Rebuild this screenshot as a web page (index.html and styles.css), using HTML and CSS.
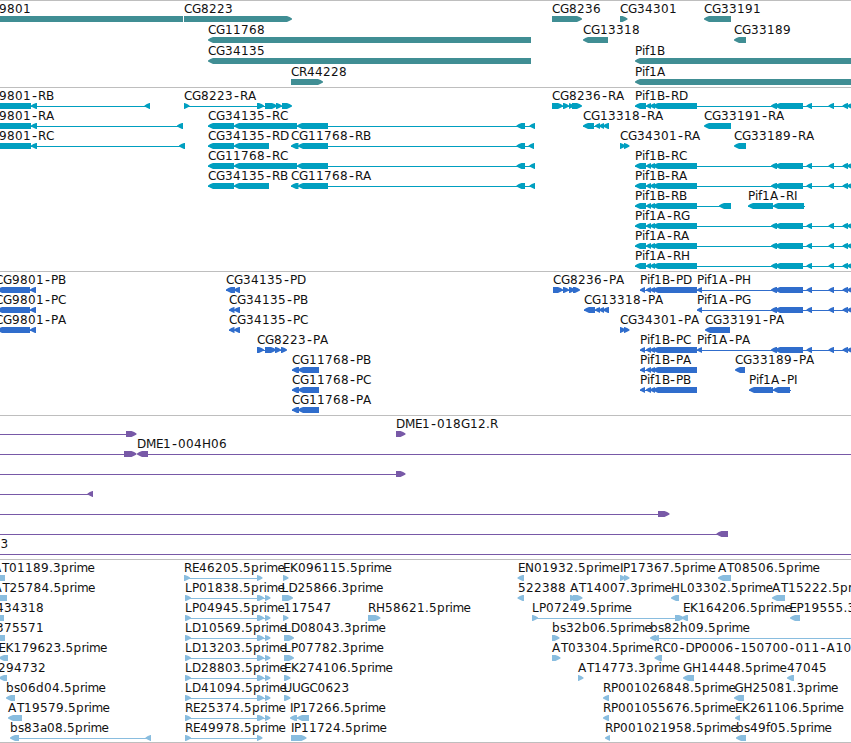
FILE: index.html
```
<!DOCTYPE html>
<html lang="en">
<head>
<meta charset="utf-8">
<title>Genome browser</title>
<link rel="stylesheet" href="styles.css">
</head>
<body>
<main class="browser">
  <section class="track track--genes"><svg class="track__canvas" id="genes"></svg></section>
  <section class="track track--transcripts"><svg class="track__canvas" id="transcripts"></svg></section>
  <section class="track track--proteins"><svg class="track__canvas" id="proteins"></svg></section>
  <section class="track track--clones"><svg class="track__canvas" id="clones"></svg></section>
  <section class="track track--ests"><svg class="track__canvas" id="ests"></svg></section>
</main>
<script src="tracks.js"></script>
</body>
</html>
```
FILE: styles.css
```
body {
  margin: 0;
  background: #fff;
}

.browser {
  display: flex;
  flex-direction: column;
  width: 851px;
  height: 743px;
  box-sizing: border-box;
  border-bottom: 1px solid #bebebe;
  overflow: hidden;
}

.track {
  box-sizing: border-box;
  border-top: 1px solid #bebebe;
  overflow: hidden;
}

.track--genes { height: 87px; color: #408e94; }
.track--transcripts { height: 184px; color: #009fc0; }
.track--proteins { height: 144px; color: #306dcc; }
.track--clones { height: 144px; color: #7859a7; }
.track--ests { height: 183px; color: #89bddf; }

.track__canvas {
  display: block;
  width: 100%;
  height: 100%;
}

.feature { fill: currentColor; }

.label {
  fill: #111;
  font: 12px "DejaVu Sans", sans-serif;
  white-space: pre;
}

.label__dash { font-size: 14px; }
```
FILE: tracks.js
```
// Feature: "row|label|label x|direction|line from-to|exons". Direction: R, L or F (flat).
const PIF_RIGHT = '771:777,775:803,806.5:812,828.5:834,842.5:848,847:855';
const PIF_B = '635:646,646:651,650:655,653:697';
const PIF_P = '640:645,646:651,650:655,653:697';
const CG_LONG = '208:234,234:297,297:328,516.5:525,529.5:535';

const tracks = {
  genes: { pitch: 21, items: [
    '0|9801|-1|F||-5:183', '0|CG8223|184|R||184:292', '0|CG8236|552|R||552:582',
    '0|CG34301|620|R||620:627.5', '0|CG33191|704|L||704:731',
    '1|CG11768|208|L||208:531', '1|CG13318|583|L||583:608', '1|CG33189|734|L||734:746',
    '2|CG34135|208|L||208:531', '2|Pif1B|635|L||635:860',
    '3|CR44228|291|R||291:323', '3|Pif1A|635|L||635:860'
  ] },
  transcripts: { pitch: 20, items: [
    '0|9801-RB|-1|L|0:150|-9:31,31:37,144.5:150',
    '1|9801-RA|-1|L|0:183|-9:31,31:37,177:183',
    '2|9801-RC|-1|L|0:185|-9:31,31:37,179:185',
    '0|CG8223-RA|184|R|184:290|184:189.5,257:264,265:277,276:282,282:292',
    '1|CG34135-RC|208|L|208:535|' + CG_LONG,
    '2|CG34135-RD|208|L|208:269|208:234,234:269',
    '2|CG11768-RB|291|L|291:534|291:298.5,298:328,516.5:525,528.5:534',
    '3|CG11768-RC|208|L|208:535|' + CG_LONG,
    '4|CG34135-RB|208|L|208:269|208:234,234:269',
    '4|CG11768-RA|291|L|291:535|291:298.5,298:328,516.5:525,529.5:535',
    '0|CG8236-RA|552|R|552:580|552:563,563:569,569:574,572:582',
    '0|Pif1B-RD|635|L|635:860|' + PIF_B + ',' + PIF_RIGHT,
    '1|CG13318-RA|583|L|583:609|583:594,595:600,599:604,603:609',
    '1|CG33191-RA|704|L||704:731',
    '2|CG34301-RA|620|R||620:625.5,624:629.5',
    '2|CG33189-RA|734|L||734:746',
    '3|Pif1B-RC|635|L|635:860|' + PIF_B + ',' + PIF_RIGHT,
    '4|Pif1B-RA|635|L|635:860|' + PIF_B + ',' + PIF_RIGHT,
    '5|Pif1B-RB|635|L|635:731|' + PIF_B + ',719:731',
    '5|Pif1A-RI|748|L|748:805|748:773,773:804',
    '6|Pif1A-RG|635|L|635:860|' + PIF_B + ',' + PIF_RIGHT,
    '7|Pif1A-RA|635|L|635:860|' + PIF_B + ',' + PIF_RIGHT,
    '8|Pif1A-RH|635|L|635:860|' + PIF_B + ',' + PIF_RIGHT
  ] },
  proteins: { pitch: 20, items: [
    '0|CG9801-PB|-5|L|0:36|-3:30,30:36', '1|CG9801-PC|-5|L|0:36|-3:30,30:36',
    '2|CG9801-PA|-5|L|0:36|-3:30,30:36',
    '0|CG34135-PD|226|L|226:240|226:235,234:240',
    '1|CG34135-PB|229|L|229:240|229:234.5,234:240',
    '2|CG34135-PC|229|L|229:240|229:234.5,234:240',
    '3|CG8223-PA|257|R|257:286|257:264,265:276,275:281,281:287',
    '4|CG11768-PB|292|L|292:319|292:299,298:319',
    '5|CG11768-PC|292|L|292:319|292:299,298:319',
    '6|CG11768-PA|292|L|292:319|292:299,298:319',
    '0|CG8236-PA|553|R|553:579|553:563,563:569,569:575,573:580',
    '0|Pif1B-PD|640|L|640:697|' + PIF_P,
    '0|Pif1A-PH|697|L|697:860|697:702,' + PIF_RIGHT,
    '1|CG13318-PA|584|L|584:609|584:595,595:600,599:604,603:609',
    '1|Pif1A-PG|697|L|697:860|697:702,' + PIF_RIGHT,
    '2|CG34301-PA|620|R||620:625.5,624:629.5',
    '2|CG33191-PA|705|L||705:730',
    '3|Pif1B-PC|640|L|640:697|' + PIF_P,
    '3|Pif1A-PA|697|L|697:860|697:702,' + PIF_RIGHT,
    '4|Pif1B-PA|640|L|640:697|' + PIF_P,
    '4|CG33189-PA|735|L||735:745',
    '5|Pif1B-PB|640|L|640:697|' + PIF_P,
    '5|Pif1A-PI|749|L|749:791|749:773,773:790'
  ] },
  clones: { pitch: 20, items: [
    '0|||R|0:134|126:136.5', '0|DME1-018G12.R|396|R||396:405.5',
    '1|||R|0:134|124:136.5', '1|DME1-004H06|137|L|140:851|137:148',
    '2|||R|0:403|396:405.5', '3|||L|0:93|87.5:93',
    '4|||R|0:667|658:669.5', '5|||L|0:728|716.5:728',
    '6|3|0.5|L|0:851|'
  ] },
  ests: { pitch: 20, items: [
    '0|AT01189.3prime|-7|F||-5:5', '1|AT25784.5prime|-6.5|F||-5:7',
    '2|434318|-4|F||-5:4', '3|375571|-4|F||-5:5',
    '4|EK179623.5prime|-1.5|L||-1:8', '5|294732|-2|L||-1:7',
    '6|bs06d04.5prime|6|L||6:15', '7|AT19579.5prime|8|L||8:22',
    '8|bs83a08.5prime|10|L|12:151|10:19,145.5:151',
    '0|RE46205.5prime|184|R|184:260|184:190,257:262.5',
    ...['LP01838', 'LP04945', 'LD10569', 'LD13203', 'LD28803', 'LD41094', 'RE25374'].map(
      (n, i) => `${i + 1}|${n}.5prime|185|R|185:269|185:191,257:264,265:270.5`),
    '8|RE49978.5prime|185|R|185:260|185:191,257:262.5',
    '0|EK096115.5prime|283|R||283:288.5', '1|LD25866.3prime|281.5|R||282:293',
    '2|117547|283.5|R||283:288.5', '3|LD08043.3prime|284|R||284:294',
    '4|LP07782.3prime|284|R||284:294', '5|EK274106.5prime|284|R||284:290.5',
    '6|UUGC0623|283.5|R||284:290.5', '7|IP17266.5prime|290|L|292:309|290:297,297:309',
    '8|IP11724.5prime|291|R||291:306.5', '2|RH58621.5prime|368|R||368:380.5',
    '0|EN01932.5prime|518|L||517.5:524', '0|IP17367.5prime|620|R||620:625.5,624:629.5',
    '0|AT08506.5prime|718|L||718:731', '1|522388|518|L||517.5:524',
    '1|AT14007.3prime|570|R||570:576,573:582.5', '1|HL03302.5prime|671|L||671:679',
    '1|AT15222.5prime|772|L||772:785', '2|LP07249.5prime|532|R|532:684|532:538,675:684',
    '2|EK164206.5prime|683|L||681.5:688', '2|EP19555.3prime|789.5|L||790:800',
    '3|bs32b06.5prime|552|R||552:559.5', '3|bs82h09.5prime|650|L|655:851|650:656,653:659',
    '4|AT03304.5prime|552|R||552:560.5', '4|RC0-DP0006-150700-011-A10|654.5|L||654.5:662',
    '5|AT14773.3prime|578|R||578:583.5', '5|GH14448.5prime|683|L||683:694',
    '5|47045|787|L||787:794', '6|RP001026848.5prime|603|L||603:609',
    '6|GH25081.3prime|734.5|L||734:744', '7|RP001055676.5prime|603|L||603:609',
    '7|EK261106.5prime|735|L||735:740', '8|RP001021958.5prime|605|L||605:610',
    '8|bs49f05.5prime|736|L||736:746'
  ] }
};

// Glyph advances in pixels; digits and anything unlisted take 8px.
const ADVANCE = { G: 9, A: 9, D: 9, H: 9, N: 9, M: 10, E: 7, P: 7, B: 7, L: 7, T: 7, U: 8.5,
  I: 3, i: 3, f: 4, '.': 4, r: 4.6, m: 10.8, e: 7, s: 6, a: 7, '-': 7 };
const NS = 'http://www.w3.org/2000/svg';

function add(parent, tag, attrs) {
  const el = document.createElementNS(NS, tag);
  for (const key in attrs) el.setAttribute(key, attrs[key]);
  parent.appendChild(el);
  return el;
}

function drawLabel(svg, text, x, baseline) {
  const label = add(svg, 'text', { class: 'label', y: baseline });
  for (const part of text.split(/(-)/).filter(Boolean)) {
    const dash = part === '-';
    const xs = [];
    for (const ch of part) {
      xs.push(dash ? x + 1 : x);
      x += ADVANCE[ch] || 8;
    }
    const span = add(label, 'tspan', { x: xs.join(' '), y: dash ? baseline + 1 : baseline });
    if (dash) span.setAttribute('class', 'label__dash');
    span.textContent = part;
  }
}

// Exon block with a rounded arrow head on the side it points to.
function exonPoints(a, b, dir, y) {
  if (dir === 'F') return `${a},${y} ${b},${y} ${b},${y + 6} ${a},${y + 6}`;
  const head = Math.min(5, b - a);
  const tip = dir === 'R' ? b : a;
  const tail = dir === 'R' ? a : b;
  const s = dir === 'R' ? -1 : 1;
  return `${tail},${y} ${tip + s * head},${y} ${tip + s * 2.4},${y + 1} ${tip},${y + 2.4} ` +
    `${tip},${y + 3.4} ${tip + s * 2.4},${y + 4.8} ${tip + s * head},${y + 6} ${tail},${y + 6}`;
}

for (const [id, track] of Object.entries(tracks)) {
  const svg = document.getElementById(id);
  for (const item of track.items) {
    const [row, text, x, dir, line, exons] = item.split('|');
    const top = row * track.pitch + 15;
    if (line) {
      const [a, b] = line.split(':').map(Number);
      add(svg, 'rect', { class: 'feature', x: a, y: top + 3, width: b - a, height: 1 });
    }
    for (const exon of exons.split(',').filter(Boolean)) {
      const [a, b] = exon.split(':').map(Number);
      add(svg, 'polygon', { class: 'feature', points: exonPoints(a, b, dir, top) });
    }
    if (text) drawLabel(svg, text, Number(x), top - 3);
  }
}
```
